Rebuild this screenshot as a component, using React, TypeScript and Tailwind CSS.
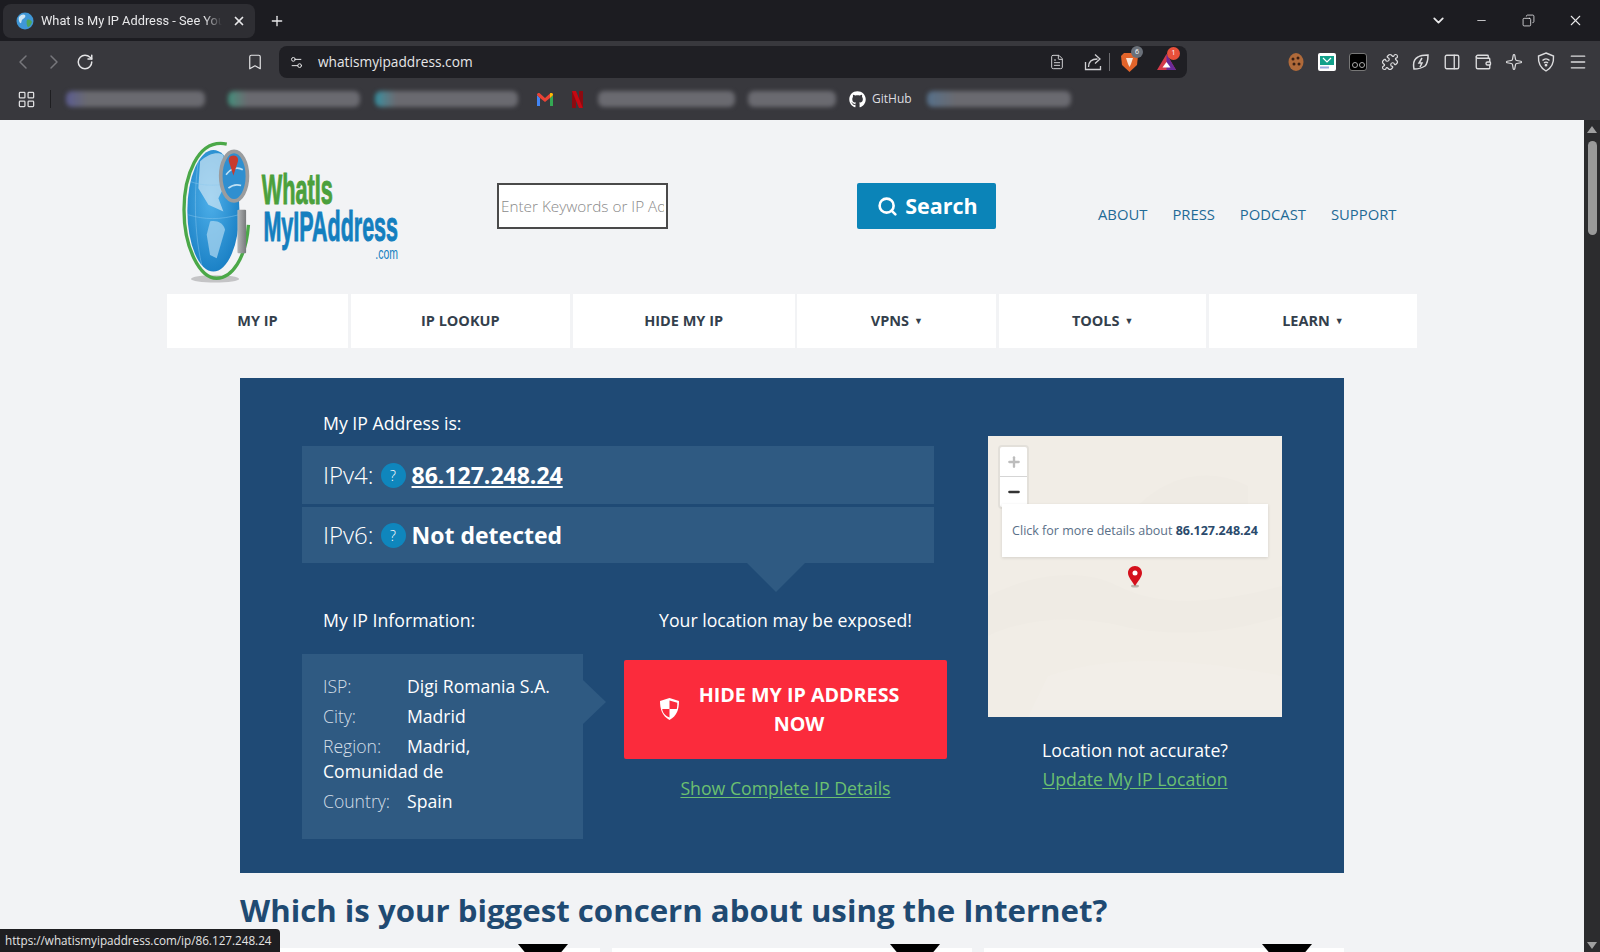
import {
  ChevronDown,
  ChevronLeft,
  ChevronRight,
  FileText,
  Minus,
  Plus,
  RotateCw,
  Search,
  Bookmark,
  Settings2,
  Puzzle,
  PanelRight,
  Wallet,
  Sparkle,
  Menu,
  X,
  Copy,
  LayoutGrid,
} from "lucide-react";
import { FaGithub } from "react-icons/fa";

const NAV = [
  { label: "MY IP", w: "w-[181px]" },
  { label: "IP LOOKUP", w: "w-[219px]" },
  { label: "HIDE MY IP", w: "w-[222px]" },
  { label: "VPNS", w: "w-[199px]", caret: true },
  { label: "TOOLS", w: "w-[207px]", caret: true },
  { label: "LEARN", w: "w-[208px]", caret: true },
];

export default function App() {
  return (
    <div className="relative flex h-[952px] w-[1600px] flex-col overflow-hidden bg-[#f2f3f5] font-['Open_Sans',sans-serif]">
      <TabStrip />
      <Toolbar />
      <BookmarksBar />
      <div className="flex min-h-0 flex-1">
        <main className="min-w-0 flex-1 overflow-hidden">
          <Header />
          <nav className="mx-auto flex w-[1250px] justify-between">
            {NAV.map((n) => (
              <a
                key={n.label}
                className={`${n.w} flex h-[54px] items-center justify-center gap-[5px] bg-white text-[14.5px] font-bold text-[#343f4c]`}
              >
                {n.label}
                {n.caret && <span className="text-[9px] text-[#343f4c]">▼</span>}
              </a>
            ))}
          </nav>
          <IpPanel />
          <h2 className="mx-auto mt-[15px] w-[1104px] text-[31.2px] leading-[44px] font-bold text-[#1f4a72]">
            Which is your biggest concern about using the Internet?
          </h2>
          {/* concern cards, only the top edge is in view */}
          <div className="mx-auto mt-[16px] flex w-[1104px] justify-between">
            <ConcernCard />
            <ConcernCard />
            <ConcernCard />
          </div>
        </main>
        <Scrollbar />
      </div>
      <div className="absolute bottom-0 left-0 flex h-[23px] w-[280px] items-center rounded-tr bg-[#1e1e21] pl-[5px] text-[11.7px] text-[#e4e4e4]">
        https://whatismyipaddress.com/ip/86.127.248.24
      </div>
    </div>
  );
}

function TabStrip() {
  return (
    <div className="flex h-[41px] shrink-0 items-center bg-[#1c1c21] text-[#e8e8ea]">
      <div className="ml-[3px] flex h-[34px] w-[252px] items-center rounded-lg bg-[#2e2e33] pl-[13px]">
        <svg width="18" height="18" viewBox="0 0 18 18" className="shrink-0">
          <circle cx="9" cy="9" r="8.5" fill="#3f97d6" />
          <path d="M3 5c2-3 5-3 6-2s0 3-2 4-1 3-2 4-3-3-2-6Z" fill="#cfe6f4" />
          <path d="M11 8c2-1 4 0 5 2-1 3-3 5-4 5s-2-5-1-7Z" fill="#4fa55a" />
        </svg>
        <span className="ml-[7px] w-[181px] overflow-hidden font-['Roboto',sans-serif] text-[12.8px] whitespace-nowrap [mask-image:linear-gradient(to_right,black_90%,transparent)]">
          What Is My IP Address - See Your Public
        </span>
        <X size={14} strokeWidth={3} className="ml-[10px] shrink-0" />
      </div>
      <Plus size={16} strokeWidth={2} className="ml-[14px]" />
      <div className="ml-auto flex items-center">
        <ChevronDown size={17} strokeWidth={2.5} className="mr-[28px]" />
        <Minus size={13} strokeWidth={1.5} className="mr-[34px]" />
        <Copy size={13} strokeWidth={1.5} className="mr-[32px] -scale-x-100" />
        <X size={17} strokeWidth={1.5} className="mr-[16px]" />
      </div>
    </div>
  );
}

function Toolbar() {
  return (
    <div className="flex h-[42px] shrink-0 items-center bg-[#38383d] text-[#e4e4e6]">
      <ChevronLeft size={24} strokeWidth={1.5} className="ml-[11px] text-[#77777c]" />
      <ChevronRight size={24} strokeWidth={1.5} className="ml-[7px] text-[#77777c]" />
      <RotateCw size={18} strokeWidth={2} className="ml-[10px]" />
      <Bookmark size={18} strokeWidth={1.6} className="ml-[152px]" />
      <div className="ml-[15px] flex h-[32px] w-[908px] items-center rounded-lg bg-[#1f1f24]">
        <Settings2 size={15} strokeWidth={1.6} className="ml-[10px]" />
        <span className="ml-[14px] pt-[1px] text-[13.7px] text-[#e6e6e8]">whatismyipaddress.com</span>
        <FileText size={16} strokeWidth={1.5} className="ml-auto text-[#cfcfd2]" />
        <svg width="18" height="18" viewBox="0 0 18 18" fill="none" stroke="#cfcfd2" strokeWidth="1.3" className="ml-[19px]">
          <path d="M1.500 9v7.500h15V13" />
          <path d="M4.500 14c0-5 3-8 9-8" />
          <path d="M11 1.500 16 6l-5 4.500" />
        </svg>
        <span className="ml-[7px] h-[18px] w-px bg-[#6a6a6e]" />
        <span className="relative ml-[11px] flex">
          <svg width="17" height="20" viewBox="0 0 17 20">
            <path d="M3 1h11l3 3-1 9-7.500 7L1 13 0 4Z" fill="#e2642a" />
            <path d="M5 6h7l-2 6-1.500 3L7 12Z" fill="#f6e3d6" />
          </svg>
          <span className="absolute -top-[6px] left-[10px] flex h-[12px] w-[12px] items-center justify-center rounded-full bg-[#6a7079] text-[7px] text-white">
            6
          </span>
        </span>
        <span className="relative mr-[11px] ml-[19px] flex">
          <svg width="19" height="16" viewBox="0 0 19 16">
            <path d="M9.500 0 19 16H0Z" fill="#d43a4a" />
            <path d="M9.500 0 19 16H9.500Z" fill="#6a2a9a" />
            <path d="M9.500 8l4 5.500h-8Z" fill="#fff" />
          </svg>
          <span className="absolute -top-[7px] left-[10px] flex h-[13px] w-[13px] items-center justify-center rounded-full bg-[#e8503a] text-[7px] text-white">
            1
          </span>
        </span>
      </div>
      <div className="ml-[100px] flex items-center gap-[13.2px] text-[#dcdcde]">
        <svg width="18" height="20" viewBox="0 0 18 20">
          <ellipse cx="9" cy="10" rx="7.500" ry="9" fill="#b06a3a" />
          <circle cx="6" cy="7" r="1.500" fill="#3a2015" />
          <circle cx="11" cy="6" r="1.500" fill="#3a2015" />
          <circle cx="7" cy="12" r="1.500" fill="#3a2015" />
          <circle cx="12" cy="12" r="1.500" fill="#3a2015" />
        </svg>
        <svg width="18" height="18" viewBox="0 0 18 18">
          <rect width="18" height="18" rx="2" fill="#fff" />
          <rect x="2" y="3" width="14" height="9" fill="#12a08a" />
          <path d="m5 5 4 4 4-4" fill="none" stroke="#fff" strokeWidth="1.2" />
          <rect x="2" y="13.500" width="9" height="2" fill="#9ad" />
        </svg>
        <div className="flex h-[18px] w-[18px] items-end justify-center gap-[1px] rounded-[3px] border border-[#777] bg-black pb-[2px]">
          <span className="h-[6px] w-[6px] rounded-full border border-[#aaa]" />
          <span className="h-[6px] w-[6px] rounded-full border border-[#aaa]" />
        </div>
        <Puzzle size={18} strokeWidth={1.6} />
        <svg width="18" height="18" viewBox="0 0 18 18" fill="none" stroke="currentColor" strokeWidth="1.500">
          <path d="M2 16c-1-5 0-10 4-12 3-2 7-2 10-2 0 4 0 8-3 11-3 2-7 3-11 3Z" />
          <path d="M10 5 7 10h3l-2 4" />
        </svg>
        <PanelRight size={18} strokeWidth={1.8} />
        <Wallet size={18} strokeWidth={1.8} />
        <Sparkle size={18} strokeWidth={1.6} />
        <svg width="18" height="20" viewBox="0 0 18 20" fill="none" stroke="currentColor" strokeWidth="1.400">
          <path d="M9 1 16.500 4c.5 7-2 12-7.500 15C3.500 16 1 11 1.500 4Z" />
          <path d="M5.500 8.500c2-2 5-2 7 0M7 11c1-1 3-1 4 0" />
          <circle cx="9" cy="13.200" r=".7" fill="currentColor" />
        </svg>
        <Menu size={20} strokeWidth={1.6} />
      </div>
    </div>
  );
}

function Blur({ w, ml, tint }: { w: string; ml: string; tint?: string }) {
  return (
    <span
      className={`${w} ${ml} h-[16px] shrink-0 rounded-[6px] bg-[#6a6a70] blur-[2px] ${tint ?? ""}`}
    />
  );
}

function BookmarksBar() {
  return (
    <div className="flex h-[37px] shrink-0 items-center bg-[#38383d] pb-[5px] text-[#dedee0]">
      <LayoutGrid size={19} strokeWidth={1.6} className="ml-[17px]" />
      <span className="ml-[14px] h-[18px] w-px bg-[#1e1e21]" />
      <Blur w="w-[139px]" ml="ml-[15px]" tint="bg-gradient-to-r from-[#5c5c90] from-0% to-[#6a6a70] to-15%" />
      <Blur w="w-[132px]" ml="ml-[23px]" tint="bg-gradient-to-r from-[#3f8f7c] from-0% to-[#6a6a70] to-15%" />
      <Blur w="w-[143px]" ml="ml-[15px]" tint="bg-gradient-to-r from-[#2f8fa0] from-0% to-[#6a6a70] to-15%" />
      <svg width="16" height="13" viewBox="0 0 16 13" className="ml-[19px] shrink-0">
        <path d="M0 2v11h3V5Z" fill="#4285f4" />
        <path d="M13 5v8h3V2Z" fill="#34a853" />
        <path d="M0 2c0-2 2-2.500 3-1.500L8 5l5-4.500c1-1 3-.5 3 1.500l-3 3-5 4-5-4Z" fill="#ea4335" />
        <path d="M13 .5c1-1 3-.5 3 1.500l-3 3Z" fill="#fbbc04" />
      </svg>
      <svg width="11" height="17" viewBox="0 0 11 17" className="ml-[19px] shrink-0">
        <path d="M0 0h4v17l-4 .5Z" fill="#8d0a10" />
        <path d="M7 0h4v17.500l-4-.5Z" fill="#8d0a10" />
        <path d="M0 0h4l7 17.500-4-.5Z" fill="#c50812" />
      </svg>
      <Blur w="w-[137px]" ml="ml-[15px]" />
      <Blur w="w-[88px]" ml="ml-[13px]" />
      <FaGithub size={17} className="ml-[13px] shrink-0 text-white" />
      <span className="ml-[6px] text-[12px]">GitHub</span>
      <Blur w="w-[144px]" ml="ml-[15px]" tint="bg-gradient-to-r from-[#56708a] from-0% to-[#6a6a70] to-20%" />
    </div>
  );
}

function Logo() {
  return (
    <svg width="227" height="147" viewBox="60 40 680 440" className="ml-[13px] shrink-0">
      <defs>
        <radialGradient id="globe" cx="45%" cy="40%" r="75%">
          <stop offset="0%" stopColor="#4fb0ea" />
          <stop offset="100%" stopColor="#0f76bd" />
        </radialGradient>
        <linearGradient id="handle" x1="0" x2="1" y1="0" y2="0">
          <stop offset="0%" stopColor="#b4b6b8" />
          <stop offset="100%" stopColor="#77797b" />
        </linearGradient>
        <clipPath id="globeClip">
          <ellipse cx="160" cy="258" rx="78" ry="182" />
        </clipPath>
      </defs>
      <ellipse cx="165" cy="462" rx="72" ry="11" fill="#c4c4c6" />
      <path
        d="M200 58C110 40 72 160 72 255c0 115 48 205 98 205 45 0 88-60 95-160"
        fill="none"
        stroke="#4ba848"
        strokeWidth="10"
      />
      <ellipse cx="160" cy="258" rx="78" ry="182" fill="url(#globe)" />
      <g clipPath="url(#globeClip)">
        <path d="M120 110c25-25 55-30 70-20l10 80-25 50 15 40-45-20-30-50Z" fill="#cfe6f4" opacity="0.7" />
        <path d="M150 290c20-5 40 5 45 25l-25 85-20-10-10-60Z" fill="#a8d4ef" opacity="0.75" />
        <path d="M90 170c40 15 90 15 140 0M85 270c50 15 95 15 150 0M120 80c-20 100-20 250 10 360" fill="none" stroke="#8cc8ee" strokeWidth="2" opacity="0.7" />
      </g>
      <rect x="232" y="255" width="26" height="130" rx="3" fill="url(#handle)" />
      <ellipse cx="222" cy="154" rx="40" ry="74" fill="#2f8fd0" stroke="#9a9c9e" strokeWidth="11" />
      <path d="M198 150c15-20 35-25 50-15M205 190c12-10 25-12 38-8" fill="none" stroke="#bfe0f4" strokeWidth="5" />
      <path d="M220 92c12 0 16 10 13 20l-13 40-13-40c-3-10 1-20 13-20Z" fill="#c83a2c" />
      <text x="305" y="238" fontFamily="'Liberation Sans', sans-serif" fontWeight="700" fontSize="130" fill="#4ba03c" stroke="#4ba03c" strokeWidth="3" textLength="213" lengthAdjust="spacingAndGlyphs">
        WhatIs
      </text>
      <text x="310" y="348" fontFamily="'Liberation Sans', sans-serif" fontWeight="700" fontSize="130" fill="#147fbf" stroke="#147fbf" strokeWidth="3" textLength="403" lengthAdjust="spacingAndGlyphs">
        MyIPAddress
      </text>
      <text x="645" y="402" fontFamily="'Liberation Sans', sans-serif" fontSize="50" fill="#147fbf" textLength="68" lengthAdjust="spacingAndGlyphs">
        .com
      </text>
    </svg>
  );
}

function Header() {
  return (
    <header className="mx-auto flex h-[174px] w-[1250px] items-start pt-[18px]">
      <Logo />
      <input
        readOnly
        placeholder="Enter Keywords or IP Address"
        className="mt-[45px] ml-[90px] h-[46px] w-[171px] border-2 border-[#4a4a4a] bg-white px-[2px] text-[15.3px] font-light text-[#777] placeholder:text-[#8a8a8a]"
      />
      <button className="mt-[45px] ml-[189px] flex h-[46px] w-[139px] items-center justify-center gap-[7px] rounded-[2px] bg-[#0b84b8] pl-[2px] text-[21.5px] font-bold text-white">
        <Search size={21} strokeWidth={3} />
        Search
      </button>
      <div className="mt-[64px] ml-[102px] flex gap-[25px] text-[14.8px] leading-[24px] text-[#1f6a96]">
        <a>ABOUT</a>
        <a>PRESS</a>
        <a>PODCAST</a>
        <a>SUPPORT</a>
      </div>
    </header>
  );
}

function Hint() {
  return (
    <span className="mr-[6px] ml-[7px] inline-flex h-[25px] w-[25px] shrink-0 items-center justify-center rounded-full bg-[#0f86bd] text-[14px]">
      ?
    </span>
  );
}

function InfoLine({ label, value }: { label: string; value: string }) {
  return (
    <div className="mb-[5px] leading-[25px]">
      <span className="inline-block w-[84px] font-light text-[#d5dfe8]">{label}</span>
      <span>{value}</span>
    </div>
  );
}

function IpPanel() {
  return (
    <section className="mx-auto mt-[30px] flex h-[495px] w-[1104px] gap-[41px] bg-[#1f4a75] px-[62px] pt-[33px] text-white">
      <div className="relative w-[645px] shrink-0">
        <div className="pl-[21px] text-[17.7px] leading-[24px]">My IP Address is:</div>
        <div className="mt-[11px] flex h-[58px] w-[632px] items-center bg-[#2f5a82] pl-[21px] text-[24px] font-light">
          IPv4:
          <Hint />
          <a className="text-[23px] font-bold underline decoration-2 underline-offset-2">86.127.248.24</a>
        </div>
        <div className="mt-[3px] flex h-[56px] w-[632px] items-center bg-[#2f5a82] pl-[21px] text-[24px] font-light">
          IPv6:
          <Hint />
          <span className="text-[23px] font-bold">Not detected</span>
        </div>
        <div className="absolute top-[152px] left-[445px] h-[29px] w-[58px] bg-[#2f5a82] [clip-path:polygon(0_0,100%_0,50%_100%)]" />
        <div className="mt-[45px] flex text-[17.7px] leading-[24px]">
          <div className="w-[322px] pl-[21px]">My IP Information:</div>
          <div className="w-[323px] text-center">Your location may be exposed!</div>
        </div>
        <div className="mt-[22px] flex items-start">
          <div className="relative h-[185px] w-[281px] shrink-0 bg-[#2f5a82] pt-[20px] pr-[30px] pl-[21px] text-[17.6px]">
            <InfoLine label="ISP:" value="Digi Romania S.A." />
            <InfoLine label="City:" value="Madrid" />
            <InfoLine label="Region:" value="Madrid, Comunidad de" />
            <InfoLine label="Country:" value="Spain" />
            <div className="absolute top-[26px] left-full h-[44px] w-[23px] bg-[#2f5a82] [clip-path:polygon(0_0,100%_50%,0_100%)]" />
          </div>
          <div className="ml-[41px] w-[323px] pt-[6px]">
            <button className="flex h-[99px] w-full items-center rounded-[2px] bg-[#fb2b3c] pr-[28px] pb-[2px] pl-[36px] text-[19.7px] leading-[29px] font-bold text-white">
              <svg width="19" height="22" viewBox="0 0 19 22" className="shrink-0">
                <path d="M9.500 0 19 3c0 8-2 15-9.500 19C2 18 0 11 0 3Z" fill="#fff" />
                <path d="M9.500 2.500V11H2.200c.6 4 2.800 6.700 7.300 8.500V11h7.300c.4-2 .5-4 .5-6.200Z" fill="#fb2b3c" />
              </svg>
              <span className="flex-1 text-center">HIDE MY IP ADDRESS NOW</span>
            </button>
            <a className="mt-[17px] block text-center text-[17.7px] leading-[24px] text-[#6cc070] underline underline-offset-2">
              Show Complete IP Details
            </a>
          </div>
        </div>
      </div>
      <div className="w-[294px] shrink-0 pt-[25px]">
        <MapBox />
        <div className="mt-[19px] text-center text-[17.7px] leading-[29px]">
          <div>Location not accurate?</div>
          <a className="text-[#6cc070] underline underline-offset-2">Update My IP Location</a>
        </div>
      </div>
    </section>
  );
}

function MapBox() {
  return (
    <div className="relative h-[281px] w-[294px] overflow-hidden bg-[#f1ede6]">
      <svg width="294" height="281" viewBox="0 0 294 281" className="absolute inset-0">
        <path d="M150 70c30-30 70-40 110-20v60c-40-20-80-20-110-40Z" fill="#efebe4" />
        <path d="M0 160c40-20 90-30 130-10s90 20 164 0v30c-60 20-120 20-160 10S40 180 0 200Z" fill="#efebe4" />
        <path d="M60 240c60-20 130-20 234 0v41H40Z" fill="#f2eee8" />
      </svg>
      <div className="absolute top-[9px] left-[10px] flex w-[31px] flex-col rounded-[4px] border-2 border-[#e3e0da] bg-white">
        <span className="flex h-[30px] items-center justify-center border-b border-[#d5d5d5] text-[#bdbdbd]">
          <Plus size={16} strokeWidth={3.5} />
        </span>
        <span className="flex h-[30px] items-center justify-center text-[#333]">
          <Minus size={16} strokeWidth={3.5} />
        </span>
      </div>
      <div className="absolute top-[68px] left-[14px] flex h-[53px] w-[266px] items-center justify-center bg-white pt-[1px] text-[12.5px] whitespace-nowrap text-[#5a7088] shadow-[0_1px_3px_rgba(0,0,0,0.12)]">
        Click for more details about&nbsp;<b className="font-bold text-[#2a4a6c]">86.127.248.24</b>
      </div>
      <svg width="14" height="22" viewBox="0 0 14 22" className="absolute top-[130px] left-[140px]">
        <ellipse cx="7" cy="20" rx="4" ry="1.500" fill="#b9b4ac" />
        <path d="M7 0c4 0 7 3 7 7 0 4-4 8-7 13C4 15 0 11 0 7c0-4 3-7 7-7Z" fill="#d4101c" />
        <circle cx="7" cy="7" r="2.500" fill="#fff" />
      </svg>
    </div>
  );
}

function ConcernCard() {
  return (
    <div className="relative h-[40px] w-[360px] bg-white">
      <div className="absolute -top-[4px] left-[278px] h-[30px] w-[50px] bg-black [clip-path:polygon(0_0,100%_0,50%_100%)]" />
    </div>
  );
}

function Scrollbar() {
  return (
    <div className="relative w-[16px] shrink-0 bg-[#2c2c2e]">
      <div className="mx-auto mt-[6px] h-0 w-0 border-x-[5px] border-b-[7px] border-x-transparent border-b-[#a0a0a0]" />
      <div className="mx-auto mt-[8px] h-[94px] w-[9px] rounded-full bg-[#9a9a9a]" />
      <div className="absolute bottom-[3px] left-[3px] h-0 w-0 border-x-[5px] border-t-[7px] border-x-transparent border-t-[#a0a0a0]" />
    </div>
  );
}
